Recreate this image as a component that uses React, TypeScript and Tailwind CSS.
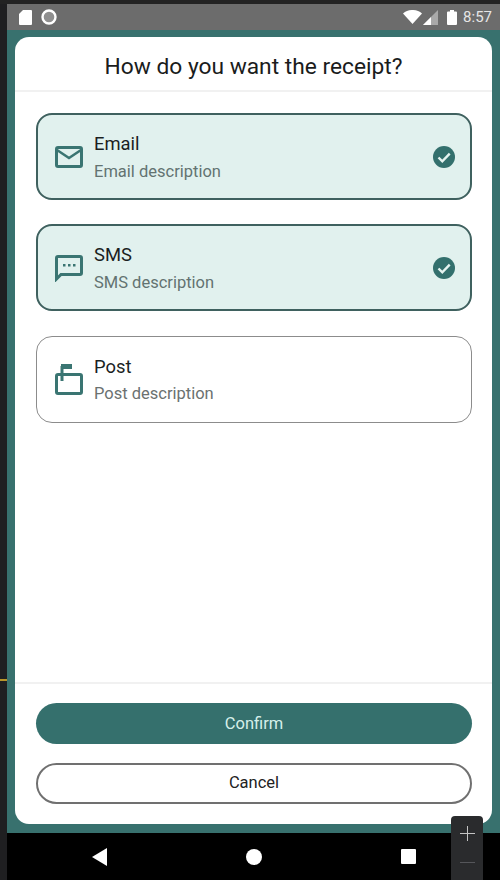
import { ReactNode } from 'react';

function MailIcon() {
  return (
    <svg width="30" height="24" viewBox="0 0 30 24" fill="none" stroke="#3a7572" strokeWidth="3">
      <rect x="2.5" y="2.5" width="25" height="19" rx="1.5" />
      <path d="M3 5l12 8 12-8" strokeWidth="2.5" />
    </svg>
  );
}

function SmsIcon() {
  return (
    <svg width="30" height="28" viewBox="0 0 30 28" fill="none">
      <path d="M2.5 25V4a1.5 1.5 0 0 1 1.5-1.5h22A1.5 1.5 0 0 1 27.5 4v15a1.5 1.5 0 0 1-1.5 1.5H7z" stroke="#3a7572" strokeWidth="3" />
      <rect x="9" y="10" width="2.5" height="2.5" fill="#3a7572" />
      <rect x="14" y="10" width="2.5" height="2.5" fill="#3a7572" />
      <rect x="19" y="10" width="2.5" height="2.5" fill="#3a7572" />
    </svg>
  );
}

function PostIcon() {
  return (
    <svg width="30" height="33" viewBox="0 0 30 33" fill="none">
      <rect x="2.5" y="11.5" width="25" height="19" rx="1.5" stroke="#3a7572" strokeWidth="3" />
      <path d="M8 18V3" stroke="#3a7572" strokeWidth="3" />
      <rect x="7" y="1" width="11" height="5" fill="#3a7572" />
    </svg>
  );
}

function CheckIcon() {
  return (
    <svg width="24" height="24" viewBox="0 0 24 24">
      <circle cx="12" cy="12" r="11" fill="#33706d" />
      <path d="M6.5 12.5l3.8 3.8 7.4-7.6" fill="none" stroke="#e6f4f1" strokeWidth="2.4" />
    </svg>
  );
}

function Option({ icon, title, desc, selected }: { icon: ReactNode; title: string; desc: string; selected?: boolean }) {
  return (
    <div
      className={
        selected
          ? 'flex items-center h-[87px] rounded-[16px] border-2 border-[#3f615f] bg-[#e1f1ee] pl-[16px] pr-[14px]'
          : 'flex items-center h-[87px] rounded-[16px] border border-[#8c8c8c] bg-white pl-[17px] pr-[15px]'
      }
    >
      <div className="w-[30px] flex justify-center">{icon}</div>
      <div className={selected ? 'ml-[10px] flex-1 pt-[2px]' : 'ml-[10px] flex-1 pt-[1px]'}>
        <div className="text-[18.4px] leading-[26px] text-[#1b1f1f]">{title}</div>
        <div className={selected ? 'text-[16.5px] leading-[24px] mt-[3px] text-[#637371]' : 'text-[16.5px] leading-[24px] mt-[2px] text-[#6b7170]'}>{desc}</div>
      </div>
      {selected ? <CheckIcon /> : null}
    </div>
  );
}

export default function App() {
  return (
    <div className="relative w-[500px] h-[880px] overflow-hidden flex flex-col bg-[#1f1f21] font-['Roboto',sans-serif]">
      <div className="h-[4px] bg-[#232323]" />
      <div className="flex flex-1 min-h-0">
        <div className="w-[7px] flex flex-col bg-[#1f1f21]">
          <div className="mt-[675px] h-[2px] bg-[#b8952a]" />
        </div>
        <div className="flex-1 flex flex-col">
          {/* status bar */}
          <div className="h-[26px] flex items-center bg-[#6c6c6c] pl-[12px] pr-[8px]">
            <svg width="13" height="15" viewBox="0 0 13 15" fill="#fff">
              <path d="M4 0h8a1 1 0 0 1 1 1v13a1 1 0 0 1-1 1H1a1 1 0 0 1-1-1V4z" />
            </svg>
            <svg className="ml-[9px]" width="16" height="16" viewBox="0 0 16 16">
              <circle cx="8" cy="8" r="6.5" fill="#8f8f8f" stroke="#fff" strokeWidth="2.4" />
            </svg>
            <div className="flex-1" />
            <svg width="19" height="14" viewBox="0 0 19 14" fill="#fff">
              <path d="M0 3.5C5 -1.2 14 -1.2 19 3.5L9.500 14z" />
            </svg>
            <svg className="ml-[1px]" width="15" height="15" viewBox="0 0 15 15">
              <path d="M15 0v15H0z" fill="#a9a9a9" />
              <path d="M8 7v8H0z" fill="#fff" />
            </svg>
            <svg className="ml-[9px]" width="10" height="15" viewBox="0 0 10 15" fill="#fff">
              <path d="M3 0h4v1.500h2a1 1 0 0 1 1 1V14a1 1 0 0 1-1 1H1a1 1 0 0 1-1-1V2.500a1 1 0 0 1 1-1h2z" />
            </svg>
            <span className="ml-[6px] text-[15px] leading-[26px] text-[#e6e6e6]">8:57</span>
          </div>

          {/* sheet on teal */}
          <div className="flex-1 min-h-0 bg-[#38716e] pt-[7px] pb-[9px] pl-[8px] pr-[8px]">
            <div className="h-full rounded-[14px] bg-white flex flex-col">
              <div className="h-[55px] pt-[8px] flex items-center justify-center border-b-2 border-[#f1f1f1] text-[22.75px] text-[#1a1c1c]">
                How do you want the receipt?
              </div>
              <div className="flex-1 flex flex-col pt-[21px] pl-[21px] pr-[20px]">
                <Option icon={<MailIcon />} title="Email" desc="Email description" selected />
                <div className="mt-[24px]">
                  <Option icon={<SmsIcon />} title="SMS" desc="SMS description" selected />
                </div>
                <div className="mt-[25px]">
                  <Option icon={<PostIcon />} title="Post" desc="Post description" />
                </div>
              </div>
              <div className="h-[142px] border-t-2 border-[#f1f1f1] pt-[19px] pl-[21px] pr-[20px] flex flex-col gap-[19px]">
                <div className="h-[41px] pt-[2px] rounded-full bg-[#35706d] flex items-center justify-center text-[16.5px] text-[#d5efea]">
                  Confirm
                </div>
                <div className="h-[41px] rounded-full border-2 border-[#707070] flex items-center justify-center text-[16.5px] text-[#222]">
                  Cancel
                </div>
              </div>
            </div>
          </div>

          {/* nav bar */}
          <div className="h-[47px] bg-black flex items-center">
            <svg className="ml-[85px]" width="15" height="18" viewBox="0 0 15 18" fill="#fff">
              <path d="M15 0v18L0 9z" />
            </svg>
            <div className="ml-[139px] w-[16px] h-[16px] rounded-full bg-white" />
            <div className="ml-[139px] w-[15px] h-[15px] rounded-[1px] bg-white" />
          </div>
        </div>
      </div>

      {/* emulator zoom control */}
      <div className="absolute left-[451px] top-[816px] w-[32px] h-[64px] rounded-t-[4px] bg-[#2a2b2d] flex flex-col items-center">
        <svg className="mt-[10px]" width="15" height="15" viewBox="0 0 15 15" stroke="#c4c4c4" strokeWidth="1">
          <path d="M7.500 0v15M0 7.500h15" />
        </svg>
        <svg className="mt-[21px]" width="15" height="1" viewBox="0 0 15 1" stroke="#55565a" strokeWidth="1">
          <path d="M0 .5h15" />
        </svg>
      </div>
    </div>
  );
}
